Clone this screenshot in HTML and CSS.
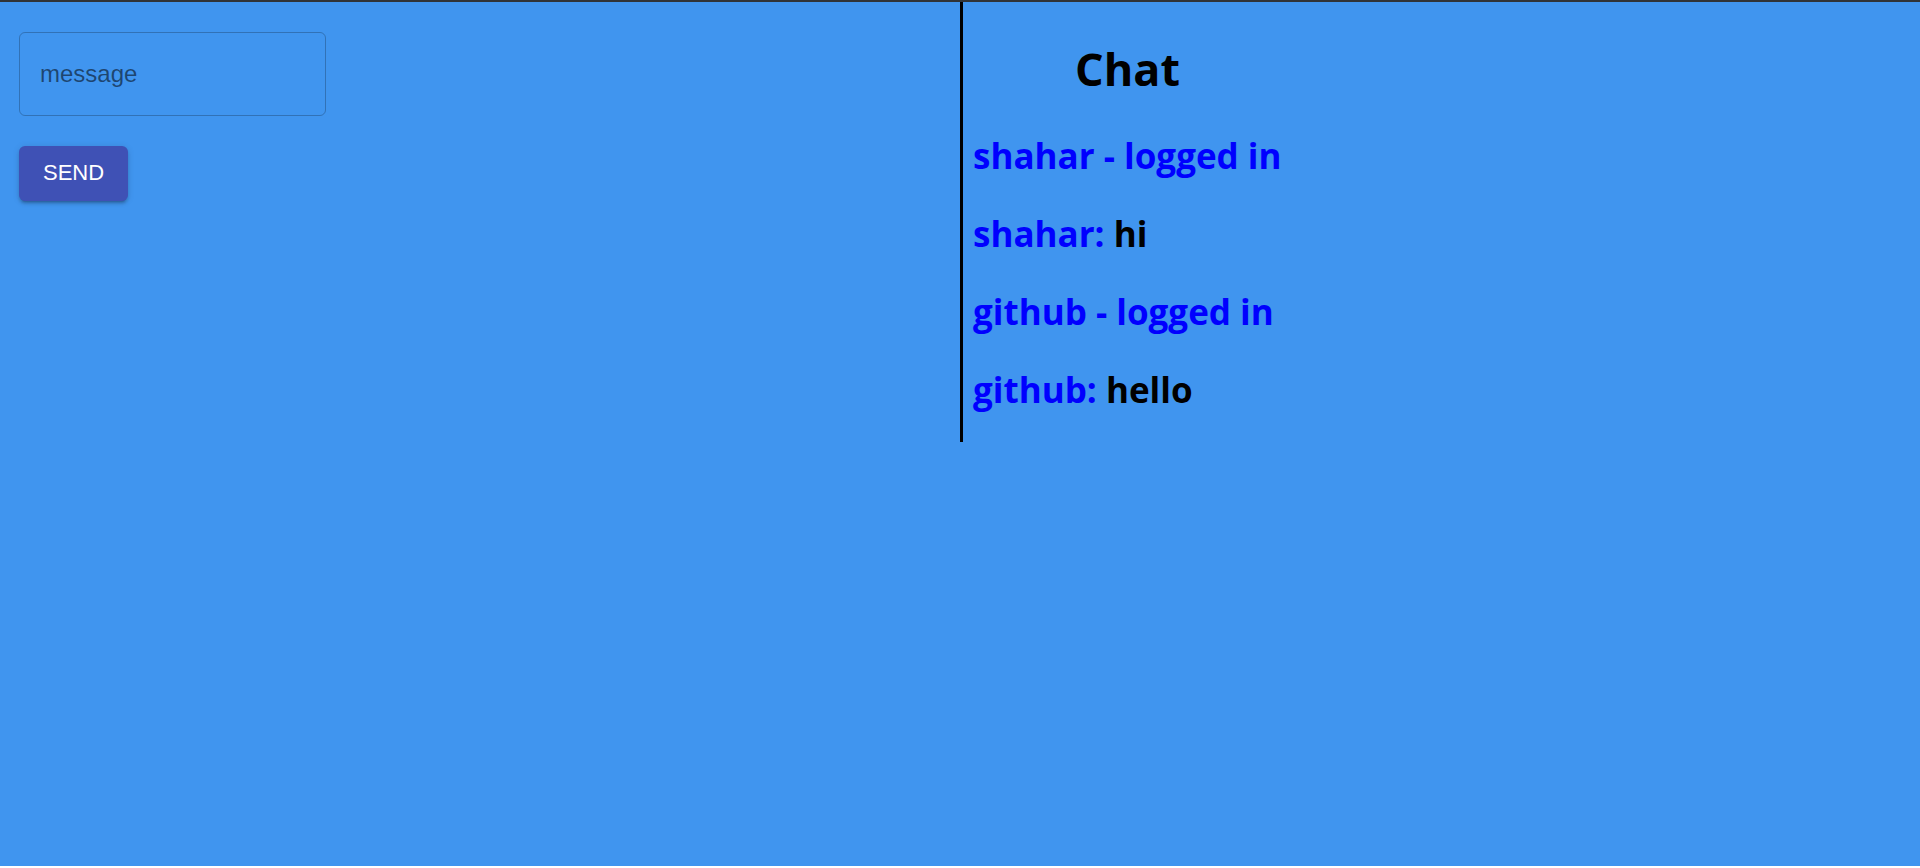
FILE: index.html
```html
<!DOCTYPE html>
<html lang="en">
<head>
<meta charset="utf-8">
<meta name="viewport" content="width=device-width, initial-scale=1">
<title>Chat</title>
<link rel="stylesheet" href="styles.css">
</head>
<body>
<main class="page">
  <form class="composer">
    <input class="message-input" type="text" placeholder="message" aria-label="message">
    <button class="send-button" type="button">SEND</button>
  </form>
  <section class="chat">
    <h1 class="chat-title">Chat</h1>
    <p class="entry"><span class="user">shahar - logged in</span></p>
    <p class="entry"><span class="user">shahar:</span> hi</p>
    <p class="entry"><span class="user">github - logged in</span></p>
    <p class="entry"><span class="user">github:</span> hello</p>
  </section>
</main>
</body>
</html>
```

FILE: styles.css
```css
* {
  box-sizing: border-box;
}

body {
  margin: 0;
  background: #fff;
  font-family: "Segoe UI", "Open Sans", sans-serif;
}

.page {
  display: grid;
  grid-template-columns: 1fr 1fr;
  align-items: start;
  min-height: calc(100vh - 2px);
  border-top: 2px solid #303438;
  background: #4095ef;
}

.composer {
  display: flex;
  flex-direction: column;
  align-items: flex-start;
  gap: 30px;
  padding: 30px 19px;
}

.message-input {
  width: 307px;
  max-width: 100%;
  padding: 27px 20px;
  border: 1px solid rgba(0, 0, 0, 0.23);
  border-radius: 6px;
  background: transparent;
  color: rgba(0, 0, 0, 0.87);
  font: 24px/28px "Liberation Sans", Arial, sans-serif;
}

.message-input::placeholder {
  color: rgba(0, 0, 0, 0.54);
  opacity: 1;
}

.send-button {
  padding: 9px 24px 10px;
  border: 0;
  border-radius: 6px;
  background: #3f51b5;
  box-shadow: 0 4px 2px -3px rgba(0, 0, 0, 0.2), 0 3px 3px rgba(0, 0, 0, 0.14), 0 1px 7px rgba(0, 0, 0, 0.12);
  color: #fff;
  font: 22px/36px "Liberation Sans", Arial, sans-serif;
}

.chat {
  padding: 35px 10px 28px;
  border-left: 3px solid #000;
}

.chat-title {
  margin: 0 0 31px 102px;
  font-size: 45px;
  line-height: 64px;
}

.entry {
  margin: 0 0 30px;
  font-size: 35px;
  font-weight: 700;
  line-height: 48px;
}

.entry:last-child {
  margin-bottom: 0;
}

.user {
  color: #00f;
}
```
